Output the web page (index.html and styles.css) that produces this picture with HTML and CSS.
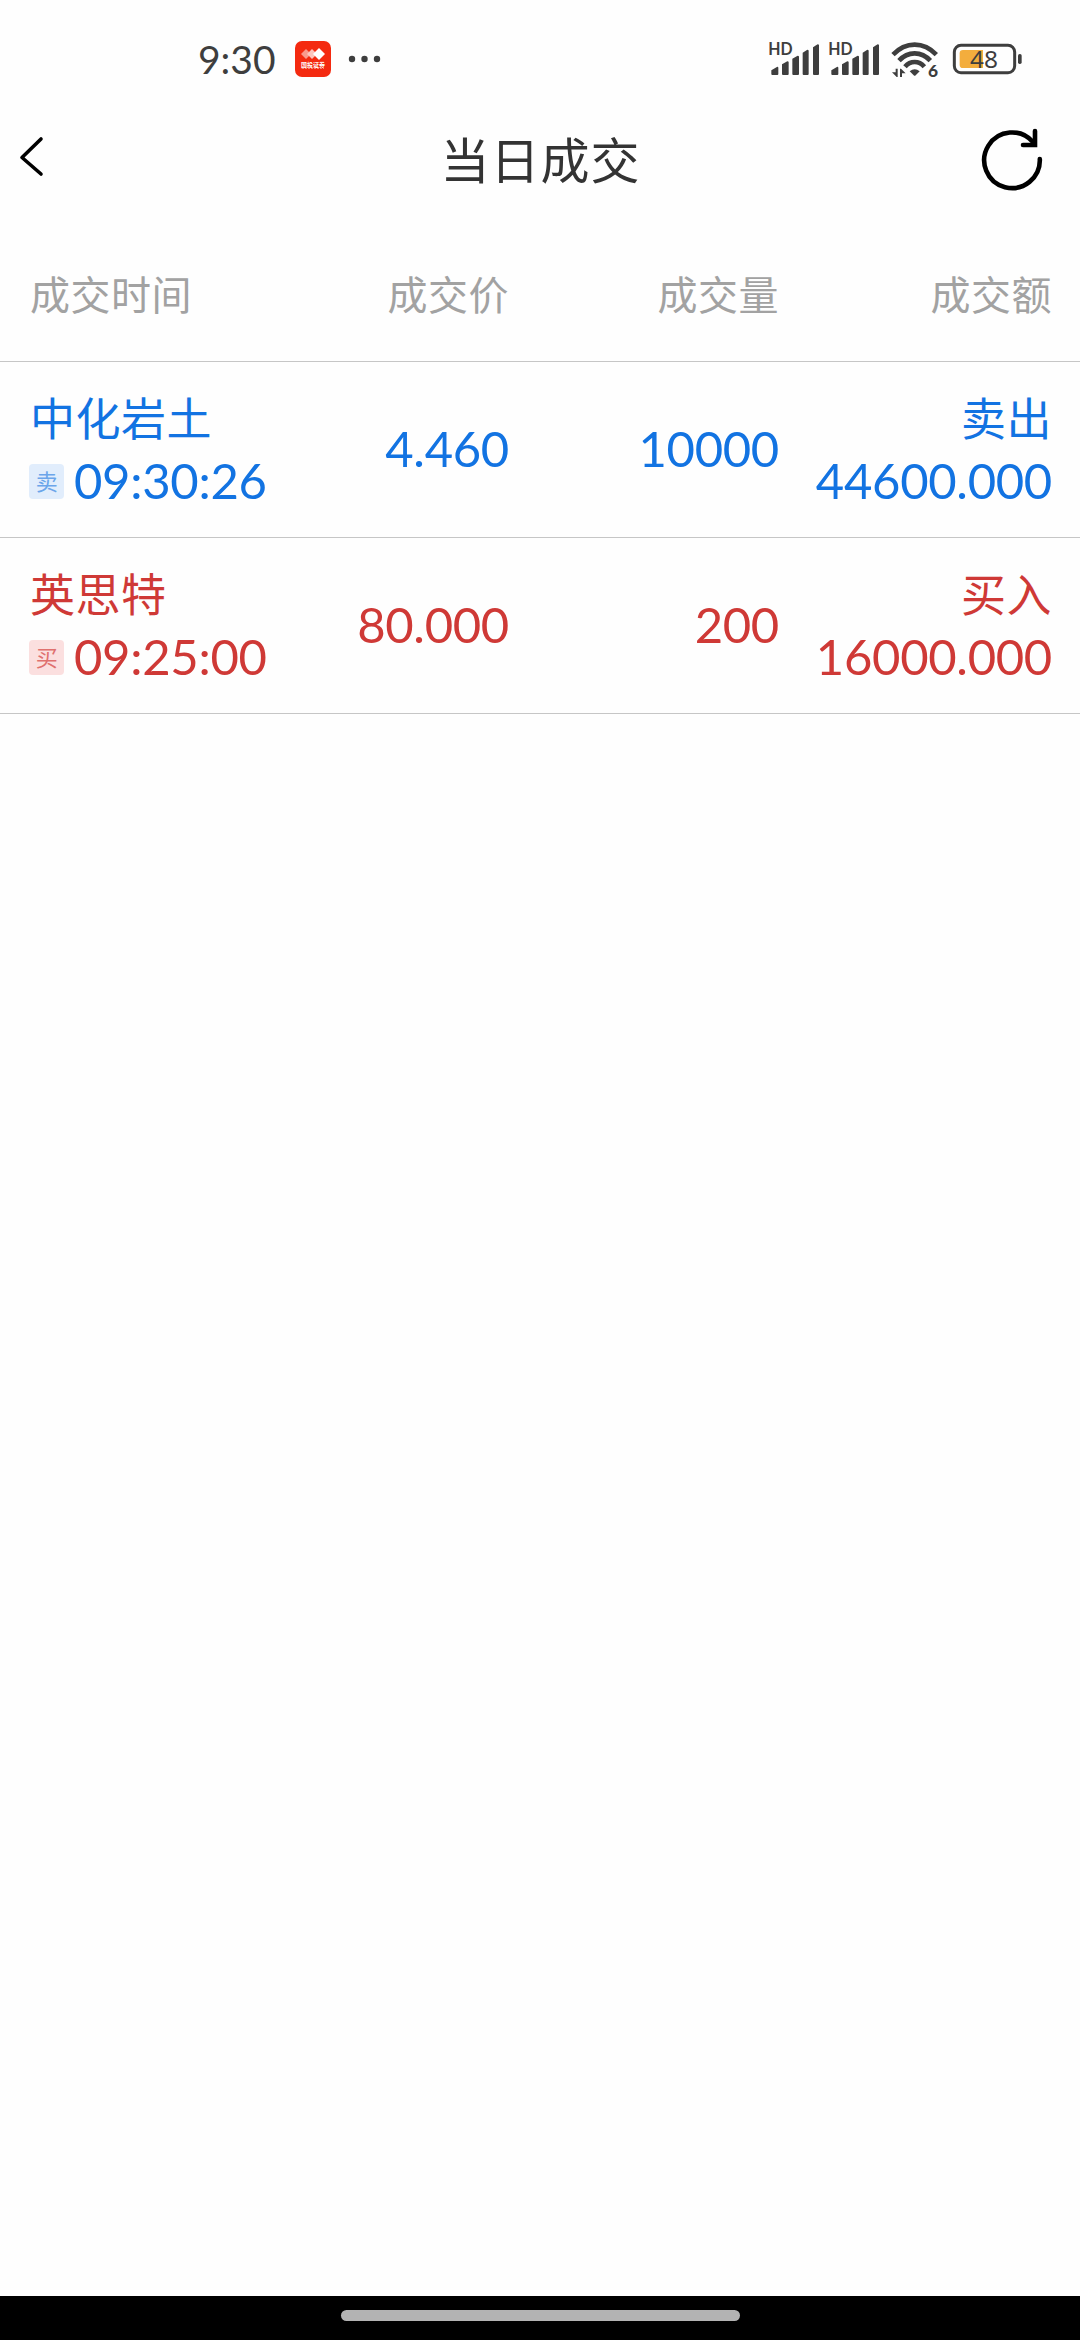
FILE: index.html
```html
<!DOCTYPE html>
<html lang="zh-CN">
<head>
    <meta charset="UTF-8">
    <meta name="viewport" content="width=device-width, initial-scale=1.0">
    <title>当日成交</title>
    <link rel="stylesheet" href="styles.css">
</head>
<body>
    <div class="status-bar">
        <div class="status-left">
            <span class="clock">9:30</span>
            <svg class="app-icon" width="38" height="38" viewBox="0 0 38 38">
                <rect x="1" y="1" width="36" height="36" rx="7" fill="#f42a10"/>
                <path d="M7 14l5-5 5 5-5 5z" fill="#f99a8d"/>
                <path d="M13 14l5-5 5 5-5 5z" fill="#fcc6be"/>
                <path d="M19 14l6-6 6 6-6 6z" fill="#fff"/>
                <text class="app-name" x="7" y="26.500" textLength="24" lengthAdjust="spacingAndGlyphs">国投证券</text>
                <path d="M8 28.500h22" stroke="#f9806f" stroke-width="1" stroke-dasharray="2 1"/>
            </svg>
            <svg class="dots" width="34" height="10" viewBox="0 0 34 10">
                <circle cx="4" cy="5" r="3.200"/>
                <circle cx="16.500" cy="5" r="3.200"/>
                <circle cx="29" cy="5" r="3.200"/>
            </svg>
        </div>
        <div class="status-right">
            <svg class="signal" width="52" height="36" viewBox="51 63 156 108">
                <text class="hd" x="52" y="105" textLength="73" lengthAdjust="spacingAndGlyphs">HD</text>
                <path d="M61 151l18-11q3 0 3 3v19q0 3-3 3H64q-3 0-3-3zM93 133l16-9q4 0 4 3v35q0 3-3 3H96q-3 0-3-3zM124 116l16-9q4 0 4 3v52q0 3-3 3h-14q-3 0-3-3zM155 98l14-9q4 0 4 3v70q0 3-3 3h-12q-3 0-3-3zM186 82l14-9q4 0 4 3v86q0 3-3 3h-12q-3 0-3-3z"/>
            </svg>
            <svg class="signal" width="52" height="36" viewBox="51 63 156 108">
                <text class="hd" x="52" y="105" textLength="73" lengthAdjust="spacingAndGlyphs">HD</text>
                <path d="M61 151l18-11q3 0 3 3v19q0 3-3 3H64q-3 0-3-3zM93 133l16-9q4 0 4 3v35q0 3-3 3H96q-3 0-3-3zM124 116l16-9q4 0 4 3v52q0 3-3 3h-14q-3 0-3-3zM155 98l14-9q4 0 4 3v70q0 3-3 3h-12q-3 0-3-3zM186 82l14-9q4 0 4 3v86q0 3-3 3h-12q-3 0-3-3z"/>
            </svg>
            <svg class="wifi" width="48" height="36" viewBox="420 63 144 108">
                <g fill="none" stroke="#3e3e3e" stroke-width="14">
                    <path d="M426 104Q455 74 491 74T556 104"/>
                    <path d="M444 122Q464 100 491 100T538 122"/>
                    <path d="M462 140Q474 126 491 126T520 140"/>
                </g>
                <path d="M476 154q15-13 30 0l-12 12q-3 3-6 0z"/>
                <path d="M434 146h6v25h-3l-14-14h11zM447 171v-25h3l14 14h-11v11z"/>
                <text class="wifi-gen" x="531" y="171">6</text>
            </svg>
            <svg class="battery" width="71" height="36" viewBox="603 63 213 108">
                <rect x="610" y="76" width="181" height="82" rx="20" fill="none" stroke="#3e3e3e" stroke-width="9"/>
                <path d="M636 90h60v54h-60q-10 0-10-10v-34q0-10 10-10z" fill="#f3ad3d"/>
                <rect x="801" y="102" width="11" height="30" rx="5"/>
                <text class="level" x="657" y="144" textLength="84" lengthAdjust="spacingAndGlyphs">48</text>
            </svg>
        </div>
    </div>

    <div class="title-bar">
        <svg class="back" width="30" height="44" viewBox="0 0 30 44">
            <path d="M25 4L6 22.500 25 39" fill="none" stroke="#000" stroke-width="3.600" stroke-linecap="round" stroke-linejoin="round"/>
        </svg>
        <h1>当日成交</h1>
        <svg width="64" height="68" viewBox="0 0 64 68">
            <g fill="none" stroke="#000" stroke-width="4.600" stroke-linecap="round">
                <path d="M59.800 33A27.800 27.800 0 1 1 53 16"/>
                <path d="M55 5v14H43" stroke-linejoin="miter"/>
            </g>
        </svg>
    </div>

    <div class="row head">
        <span>成交时间</span>
        <span>成交价</span>
        <span>成交量</span>
        <span>成交额</span>
    </div>

    <div class="row sell">
        <div class="stock">
            <div class="name">中化岩土</div>
            <div class="time"><span class="tag">卖</span>09:30:26</div>
        </div>
        <div>4.460</div>
        <div>10000</div>
        <div class="amount">
            <div class="name">卖出</div>
            <div>44600.000</div>
        </div>
    </div>

    <div class="row buy">
        <div class="stock">
            <div class="name">英思特</div>
            <div class="time"><span class="tag">买</span>09:25:00</div>
        </div>
        <div>80.000</div>
        <div>200</div>
        <div class="amount">
            <div class="name">买入</div>
            <div>16000.000</div>
        </div>
    </div>

    <div class="home-bar">
        <div class="home-pill"></div>
    </div>
</body>
</html>
```
FILE: styles.css
```css
* {
    box-sizing: border-box;
}
body {
    font-family: Lato, "Noto Sans CJK SC", sans-serif;
    background-color: #fefefe;
    display: flex;
    flex-direction: column;
    height: 2340px;
    margin: 0;
}
svg {
    display: block;
    flex: none;
    overflow: visible;
}

/* Status bar */
.status-bar {
    display: flex;
    justify-content: space-between;
    align-items: center;
    height: 118px;
    padding: 0 57px 0 198px;
}
.status-left, .status-right {
    display: flex;
    align-items: center;
}
.status-right svg, .dots {
    fill: #3e3e3e;
}
.clock {
    width: 96px;
    font-size: 39px;
    line-height: 40px;
    color: #3e3e3e;
}
.app-name {
    font-family: "Noto Sans CJK SC", sans-serif;
    font-size: 6px;
    font-weight: bold;
    fill: #fff;
}
.dots {
    margin-left: 16px;
}
.signal {
    margin-right: 8px;
}
.wifi {
    margin: 0 13px 0 3px;
}
.hd {
    font-family: Lato, sans-serif;
    font-size: 49px;
    font-weight: bold;
}
.wifi-gen {
    font-family: Lato, sans-serif;
    font-size: 52px;
    font-weight: 900;
}
.level {
    font-family: "Noto Sans", sans-serif;
    font-size: 71px;
}

/* Title bar */
.title-bar {
    display: flex;
    justify-content: space-between;
    align-items: center;
    height: 84px;
    padding: 0 36px 0 16px;
}
.back {
    margin-bottom: 6px;
}
.title-bar h1 {
    margin: 0 0 0 55px;
    font-size: 49px;
    font-weight: normal;
    line-height: 60px;
    letter-spacing: 1px;
    color: #333;
}

/* Deal list */
.row {
    display: grid;
    grid-template-columns: 209px 270px 270px 273px;
    align-items: center;
    height: 176px;
    padding: 0 28px 3px 30px;
    border-bottom: 1px solid #c6c6c6;
    font-size: 49px;
    line-height: 58px;
    letter-spacing: -0.3px;
    text-align: right;
    white-space: nowrap;
}
.row > :first-child {
    text-align: left;
}
.head {
    height: 160px;
    padding-top: 27px;
    padding-bottom: 0;
    font-size: 40px;
    letter-spacing: 0.5px;
    color: #a2a2a2;
}
.name {
    font-size: 45px;
    line-height: 64px;
    letter-spacing: 0.5px;
}
.amount {
    margin-bottom: 1px;
}
.sell {
    color: #1273e2;
}
.buy {
    color: #cf3936;
}
.time {
    display: flex;
    align-items: center;
}
.tag {
    flex: none;
    width: 35px;
    height: 35px;
    margin: 3px 10px 0 -1px;
    border-radius: 4px;
    font-size: 22px;
    line-height: 35px;
    text-align: center;
}
.sell .tag {
    background-color: #e1edfc;
    color: #6ba5ea;
}
.buy .tag {
    background-color: #fbdfdf;
    color: #e0706e;
}

/* Home indicator */
.home-bar {
    display: flex;
    justify-content: center;
    height: 44px;
    margin-top: auto;
    padding-top: 14px;
    background-color: #000;
}
.home-pill {
    width: 399px;
    height: 11px;
    border-radius: 6px;
    background-color: #b3b3b3;
}
```
